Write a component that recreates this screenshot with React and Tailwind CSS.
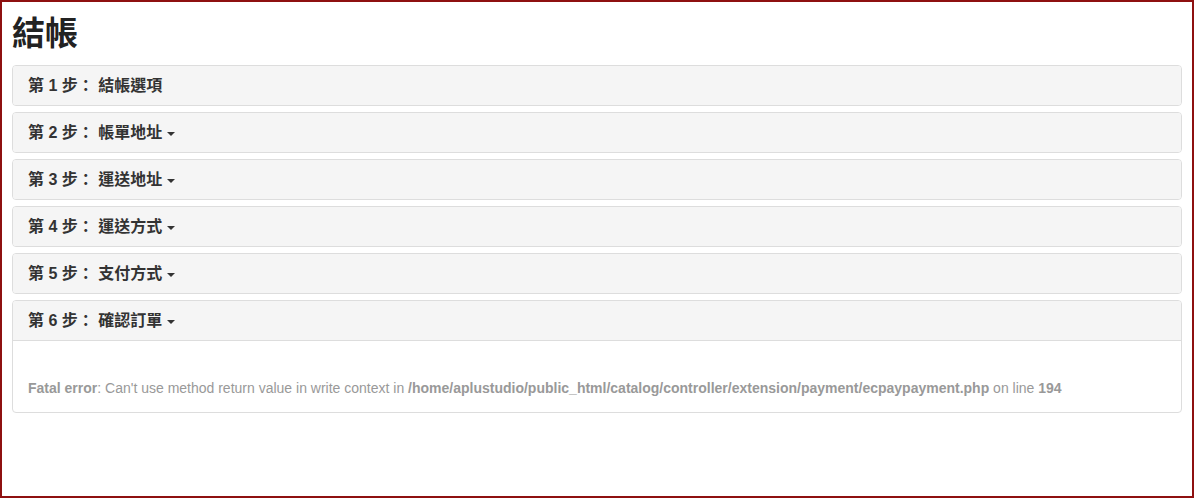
import React from "react";

const steps = [
	{ n: 1, title: "結帳選項", caret: false },
	{ n: 2, title: "帳單地址", caret: true },
	{ n: 3, title: "運送地址", caret: true },
	{ n: 4, title: "運送方式", caret: true },
	{ n: 5, title: "支付方式", caret: true },
	{ n: 6, title: "確認訂單", caret: true, open: true },
];

const font = {
	fontFamily: '"Liberation Sans", "Noto Sans CJK TC", sans-serif',
};

const Caret = () => (
	<span className="inline-block ml-[5px] mt-[2px] w-0 h-0 border-l-[4px] border-r-[4px] border-t-[4px] border-l-transparent border-r-transparent border-t-[#333]"></span>
);

const App = () => {
	return (
		<div
			className="w-[1194px] h-[498px] border-2 border-[#8e1010] bg-white text-[#333] overflow-hidden"
			style={font}
		>
			<div className="px-[10px]">
				<h1 className="pt-[10px] mb-[9px] text-[33px] leading-[44px] font-bold text-[#222]">
					結帳
				</h1>
				<div className="flex flex-col gap-[6px]">
					{steps.map((s) => (
						<div
							key={s.n}
							className="border border-[#ddd] rounded-[4px] bg-white overflow-hidden"
						>
							<div
								className={`h-[39px] px-[15px] flex items-center bg-[#f5f5f5] text-[16px] font-bold text-[#333] ${
									s.open ? "border-b border-[#ddd] h-[40px]" : ""
								}`}
							>
								<span>
									第 {s.n} 步： {s.title}
								</span>
								{s.caret && <Caret />}
							</div>
							{s.open && (
								<div className="px-[15px] pt-[17px] pb-[14px] text-[14px] leading-[20px] text-[#999]">
									<br />
									<b>Fatal error</b>: Can't use method return value in write
									context in{" "}
									<b>
										/home/aplustudio/public_html/catalog/controller/extension/payment/ecpaypayment.php
									</b>{" "}
									on line <b>194</b>
								</div>
							)}
						</div>
					))}
				</div>
			</div>
		</div>
	);
};

export default App;
